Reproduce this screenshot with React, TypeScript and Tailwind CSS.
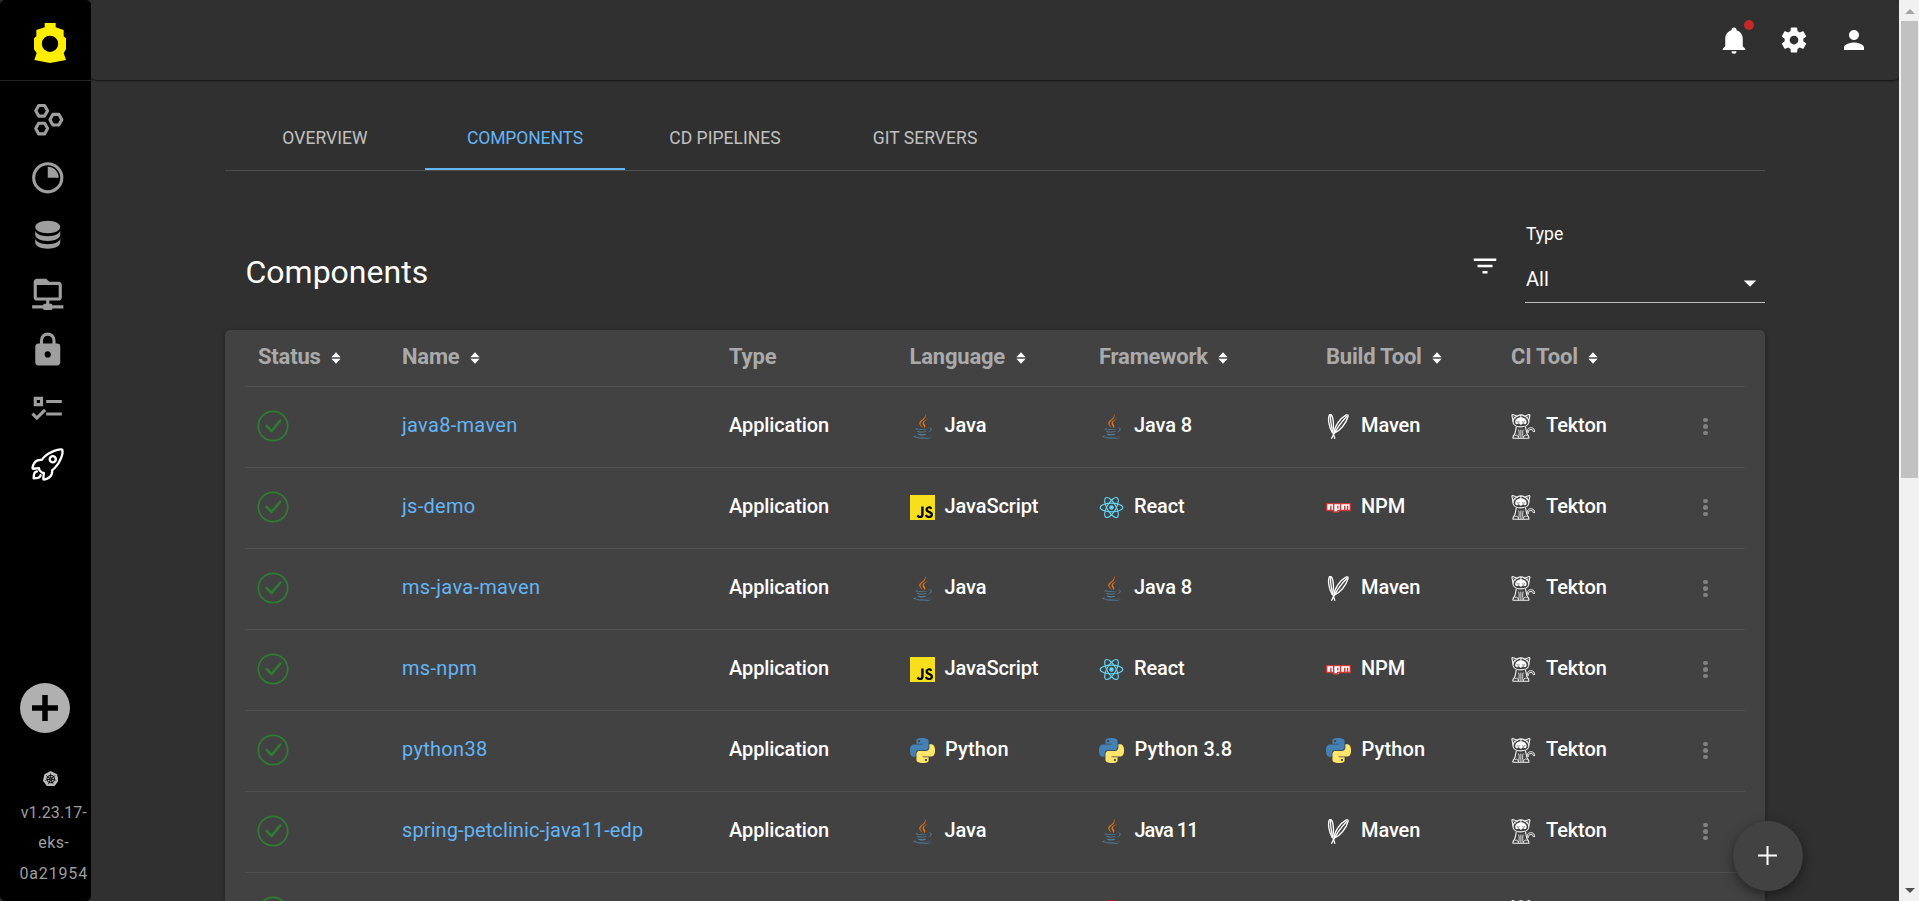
import type { ReactNode } from "react";
import { FaNpm } from "react-icons/fa";
import { IoRocketOutline } from "react-icons/io5";
import { MdPerson } from "react-icons/md";
import { SiJavascript, SiKubernetes } from "react-icons/si";

function Glyph({ d, size }: { d: string; size: string }) {
  return (
    <svg viewBox="0 0 24 24" fill="currentColor" className={size}>
      <path d={d} />
    </svg>
  );
}

const PIE =
  "M12,2A10,10 0 0,1 22,12A10,10 0 0,1 12,22A10,10 0 0,1 2,12A10,10 0 0,1 12,2M12,4A8,8 0 0,0 4,12A8,8 0 0,0 12,20A8,8 0 0,0 20,12A8,8 0 0,0 12,4M12,5A7,7 0 0,1 19,12H12V5Z";
const DATABASE =
  "M12,3C7.58,3 4,4.79 4,7C4,9.21 7.58,11 12,11C16.42,11 20,9.21 20,7C20,4.79 16.42,3 12,3M4,9V12C4,14.21 7.58,16 12,16C16.42,16 20,14.21 20,12V9C20,11.21 16.42,13 12,13C7.58,13 4,11.21 4,9M4,14V17C4,19.21 7.58,21 12,21C16.42,21 20,19.21 20,17V14C20,16.21 16.42,18 12,18C7.58,18 4,16.21 4,14Z";
const FOLDER_NETWORK =
  "M15 20C15 19.45 14.55 19 14 19H13V17H19C20.11 17 21 16.11 21 15V7C21 5.9 20.11 5 19 5H13L11 3H5C3.9 3 3 3.9 3 5V15C3 16.11 3.9 17 5 17H11V19H10C9.45 19 9 19.45 9 20H2V22H9C9 22.55 9.45 23 10 23H14C14.55 23 15 22.55 15 22H22V20H15M5 15V7H19V15H5Z";
const LOCK =
  "M12,17A2,2 0 0,0 14,15C14,13.89 13.1,13 12,13A2,2 0 0,0 10,15A2,2 0 0,0 12,17M18,8A2,2 0 0,1 20,10V20A2,2 0 0,1 18,22H6A2,2 0 0,1 4,20V10C4,8.89 4.9,8 6,8H7V6A5,5 0 0,1 12,1A5,5 0 0,1 17,6V8H18M12,3A3,3 0 0,0 9,6V8H15V6A3,3 0 0,0 12,3Z";
const CHECKS =
  "M3,5H9V11H3V5M5,7V9H7V7H5M11,7H21V9H11V7M11,15H21V17H11V15M5,20L1.5,16.5L2.91,15.09L5,17.17L9.59,12.59L11,14L5,20Z";
const BELL =
  "M21,19V20H3V19L5,17V11C5,7.9 7.03,5.17 10,4.29C10,4.19 10,4.1 10,4A2,2 0 0,1 12,2A2,2 0 0,1 14,4C14,4.1 14,4.19 14,4.29C16.97,5.17 19,7.9 19,11V17L21,19M14,21A2,2 0 0,1 12,23A2,2 0 0,1 10,21";
const COG =
  "M12,15.5A3.5,3.5 0 0,1 8.5,12A3.5,3.5 0 0,1 12,8.5A3.5,3.5 0 0,1 15.5,12A3.5,3.5 0 0,1 12,15.5M19.43,12.97C19.47,12.65 19.5,12.33 19.5,12C19.5,11.67 19.47,11.34 19.43,11L21.54,9.37C21.73,9.22 21.78,8.95 21.66,8.73L19.66,5.27C19.54,5.05 19.27,4.96 19.05,5.05L16.56,6.05C16.04,5.66 15.5,5.32 14.87,5.07L14.5,2.42C14.46,2.18 14.25,2 14,2H10C9.75,2 9.54,2.18 9.5,2.42L9.13,5.07C8.5,5.32 7.96,5.66 7.44,6.05L4.95,5.05C4.73,4.96 4.46,5.05 4.34,5.27L2.34,8.73C2.21,8.95 2.27,9.22 2.46,9.37L4.57,11C4.53,11.34 4.5,11.67 4.5,12C4.5,12.33 4.53,12.65 4.57,12.97L2.46,14.63C2.27,14.78 2.21,15.05 2.34,15.27L4.34,18.73C4.46,18.95 4.73,19.03 4.95,18.95L7.44,17.94C7.96,18.34 8.5,18.68 9.13,18.93L9.5,21.58C9.54,21.82 9.75,22 10,22H14C14.25,22 14.46,21.82 14.5,21.58L14.87,18.93C15.5,18.67 16.04,18.34 16.56,17.94L19.05,18.95C19.27,19.03 19.54,18.95 19.66,18.73L21.66,15.27C21.78,15.05 21.73,14.78 21.54,14.63L19.43,12.97Z";
const FILTER = "M6,13H18V11H6M3,6V8H21V6M10,18H14V16H10V18Z";

function Hexagons() {
  return (
    <svg viewBox="0 0 24 24" fill="none" stroke="currentColor" strokeWidth="2" strokeLinejoin="round" className="size-[37.5px]">
      <path d="M4.3 6.25L6.2 2.85H10L11.9 6.25L10 9.65H6.2Z" />
      <path d="M4.3 17.65L6.2 14.25H10L11.9 17.65L10 21.05H6.2Z" />
      <path d="M13.4 11.95L15.3 8.55H19.1L21 11.95L19.1 15.35H15.3Z" />
    </svg>
  );
}

function Logo() {
  return (
    <svg viewBox="0 0 96 120" className="h-10 w-8">
      <path
        fill="#ffee00"
        fillRule="evenodd"
        d="M32 0H65V13L89 21V40L96 46V79L89 90L96 111L48 120L1 111L8 90L0 79V46L7 40V21L32 13ZM48 38A24.5 24.5 0 1 0 48 87A24.5 24.5 0 1 0 48 38Z"
      />
    </svg>
  );
}

function Java() {
  return (
    <svg viewBox="0 0 384 512" className="h-[25px] w-[19px]">
      <path
        fill="#ea7414"
        d="M192.34 280.8c-19-42.7-83.1-80.2 0-145.8C296 53.2 242.84 0 242.84 0c21.5 84.5-75.6 110.1-110.7 162.6-23.9 35.9 11.7 74.4 60.2 118.2zM306.94 104.6c.1 0-175.2 43.8-91.5 140.2 24.7 28.4-6.5 54-6.5 54s62.7-32.4 33.9-72.9c-26.9-37.8-47.5-56.6 64.1-121.3z"
      />
      <path
        fill="#5382a1"
        d="M277.74 312.9c9.8-6.7 23.4-12.5 23.4-12.5s-38.7 7-77.2 10.2c-47.1 3.9-97.7 4.7-123.1 1.3-60.1-8 33-30.1 33-30.1s-36.1-2.4-80.6 19c-52.5 25.4 130 37 224.5 12.1zM300.84 375.1a12.19 12.19 0 0 1-2 2.6c128.3-33.7 81.1-118.9 19.8-97.3a17.33 17.33 0 0 0-8.2 6.3 70.45 70.45 0 0 1 11-3c31-6.5 75.5 41.5-20.6 91.4zM348 437.4s14.5 11.9-15.9 21.2c-57.9 17.5-240.8 22.8-291.6.7-18.3-7.9 16-19 26.8-21.3 11.2-2.4 17.7-2 17.7-2-20.3-14.3-131.3 28.1-56.4 40.2C232.84 509.4 401 461.3 348 437.4zM124.44 396c-78.7 22 47.9 67.4 148.1 24.5a185.89 185.89 0 0 1-28.2-13.8c-44.7 8.5-65.4 9.1-106 4.5-33.5-3.8-13.9-15.2-13.9-15.2zM304.24 493.2c-78.7 14.8-175.8 13.1-233.3 3.6 0-.1 11.8 9.7 72.4 13.6 92.2 5.9 233.8-3.3 237.1-46.9 0 0-6.4 16.5-76.2 29.7zM260.64 353c-59.2 11.4-93.5 11.1-136.8 6.6-33.5-3.5-11.6-19.7-11.6-19.7-86.8 28.8 48.2 61.4 169.5 25.9a60.37 60.37 0 0 1-21.1-12.8z"
      />
    </svg>
  );
}

function Python() {
  return (
    <svg viewBox="0 0 24 24" className="size-[25px]">
      <path
        fill="#4481b4"
        d="M14.25.18l.9.2.73.26.59.3.45.32.34.34.25.34.16.33.1.3.04.26.02.2-.01.13V8.5l-.05.63-.13.55-.21.46-.26.38-.3.31-.33.25-.35.19-.35.14-.33.1-.3.07-.26.04-.21.02H8.77l-.69.05-.59.14-.5.22-.41.27-.33.32-.27.35-.2.36-.15.37-.1.35-.07.32-.04.27-.02.21v3.06H3.17l-.21-.03-.28-.07-.32-.12-.35-.18-.36-.26-.36-.36-.35-.46-.32-.59-.28-.73-.21-.88-.14-1.05-.05-1.23.06-1.22.16-1.04.24-.87.32-.71.36-.57.4-.44.42-.33.42-.24.4-.16.36-.1.32-.05.24-.01h.16l.06.01h8.16v-.83H6.18l-.01-2.75-.02-.37.05-.34.11-.31.17-.28.25-.26.31-.23.38-.2.44-.18.51-.15.58-.12.64-.1.71-.06.77-.04.84-.02 1.27.05zm-6.3 1.98l-.23.33-.08.41.08.41.23.34.33.22.41.09.41-.09.33-.22.23-.34.08-.41-.08-.41-.23-.33-.33-.22-.41-.09-.41.09z"
      />
      <path
        fill="#ffe56c"
        d="M21.04 6.11l.28.06.32.12.35.18.36.27.36.35.35.47.32.59.28.73.21.88.14 1.04.05 1.23-.06 1.23-.16 1.04-.24.86-.32.71-.36.57-.4.45-.42.33-.42.24-.4.16-.36.09-.32.05-.24.02-.16-.01h-8.22v.82h5.84l.01 2.76.02.36-.05.34-.11.31-.17.29-.25.25-.31.24-.38.2-.44.17-.51.15-.58.13-.64.09-.71.07-.77.04-.84.01-1.27-.04-1.07-.14-.9-.2-.73-.25-.59-.3-.45-.33-.34-.34-.25-.34-.16-.33-.1-.3-.04-.25-.02-.2.01-.13v-5.34l.05-.64.13-.54.21-.46.26-.38.3-.32.33-.24.35-.2.35-.14.33-.1.3-.06.26-.04.21-.02.13-.01h5.84l.69-.05.59-.14.5-.21.41-.28.33-.32.27-.35.2-.36.15-.36.1-.35.07-.32.04-.28.02-.21V6.07h2.09l.14.01zM14.57 20.36l-.23.33-.08.41.08.41.23.33.33.23.41.08.41-.08.33-.23.23-.33.08-.41-.08-.41-.23-.33-.33-.23-.41-.08-.41.08z"
      />
    </svg>
  );
}

function ReactLogo() {
  return (
    <svg viewBox="-12.5 -12.5 25 25" className="size-[25px]" fill="none" stroke="#61dafb" strokeWidth="1.1">
      <circle r="2.2" fill="#61dafb" stroke="none" />
      <ellipse rx="11.3" ry="4.4" />
      <ellipse rx="11.3" ry="4.4" transform="rotate(60)" />
      <ellipse rx="11.3" ry="4.4" transform="rotate(120)" />
    </svg>
  );
}

function Npm() {
  return (
    <span className="relative flex h-[25px] w-[25px] items-center justify-center text-[#cb3837]">
      <span className="absolute left-px top-[9px] h-[7px] w-[23px] bg-white" />
      <span className="absolute left-[8px] top-[9px] h-[8px] w-[5px] bg-white" />
      <FaNpm className="relative h-[22.2px] w-[25px]" />
    </span>
  );
}

/* Two crossing feathers. */
function Maven() {
  return (
    <svg viewBox="0 0 25 25" className="size-[25px]" fill="none" stroke="#fff" strokeWidth="1.3" strokeLinecap="round" strokeLinejoin="round">
      <path d="M3.4 .8C1.8 4.2 2.5 12.5 6.3 18.6C8.3 13 7.5 3.4 5.2 .8C4.7 .3 3.8 .3 3.4 .8Z" />
      <path d="M4.3 1.5C4.7 9 5.5 16 8.8 24.3" />
      <path d="M7.9 19.4C8.2 12.5 14 4.3 20.3 .9C21.5 .5 22.4 1.3 22 2.5C20.3 9.3 14.2 16.8 7.9 19.4Z" />
      <path d="M20.8 2.2C15 8.5 10 14.5 5.7 24.3" />
    </svg>
  );
}

/* Sitting robot cat with a curled tail. */
function Tekton() {
  return (
    <svg viewBox="0 0 25 25" className="size-[25px]" fill="none" stroke="#f2f2f2" strokeWidth="1.1" strokeLinecap="round" strokeLinejoin="round">
      <path d="M2 7.2L.9 1.2Q.9 .5 1.7 .6L6.5 2.3M17.8 7.2L18.9 1.2Q18.9 .5 18.1 .6L13.3 2.3" />
      <path d="M2.8 2.8L4.6 4.1M17 2.8L15.2 4.1" strokeWidth=".8" />
      <path d="M6.3 2C8.5 .6 11.4 .6 13.6 2C16.5 3.3 18 6 17.8 8.5C17.2 11.3 13.5 12.9 9.9 12.9S2.6 11.3 2 8.5C1.8 6 3.3 3.3 6.3 2ZM9.9 1V3.5" />
      <path fill="#fff" stroke="none" d="M4.3 7C5.2 4.4 7.5 3.2 9.9 3.2S14.6 4.4 15.5 7C15.9 8.7 15.2 9.8 14 10.3L12 9.3L9.9 11L7.8 9.3L5.8 10.3C4.6 9.8 3.9 8.7 4.3 7Z" />
      <path stroke="#424242" strokeWidth=".7" d="M6 7.8Q7.2 8.6 8.3 8M13.8 7.8Q12.6 8.6 11.5 8" />
      <path d="M5.3 13C4.7 15.5 4.5 18.5 3.5 20.5C2.5 21.5 1.7 22.7 1.9 24.3H17.9C18.1 22.7 17.3 21.5 16.3 20.5C15.5 18.5 15.1 15.5 14.5 13" />
      <path strokeWidth=".9" d="M7.7 16C8.5 18 8.3 21 7.5 24M12.1 16C11.3 18 11.5 21 12.3 24M9.9 16V23.5M4.5 21.3C5.8 20.5 7 21.5 7.2 23M15.3 21.3C14 20.5 12.8 21.5 12.6 23" />
      <path strokeWidth="1" d="M16.5 18.2C15.6 15.2 17.8 13.5 20.2 13.7C22.6 13.9 24 15.7 23.6 17.5M17.4 18.3C16.9 16.4 18.3 15.4 20 15.5C21.7 15.7 22.2 16.6 22.2 17.6L23.5 17.5" />
    </svg>
  );
}

function Lang({ kind }: { kind: string }) {
  if (kind === "java") return <Java />;
  if (kind === "js") return <SiJavascript className="size-[25px] bg-black text-[#f7df1e]" />;
  if (kind === "react") return <ReactLogo />;
  if (kind === "npm") return <Npm />;
  if (kind === "maven") return <Maven />;
  if (kind === "python") return <Python />;
  if (kind === "tekton") return <Tekton />;
  if (kind === "red") return <span className="size-[25px] rounded-full bg-[#cc1018]" />;
  return null;
}

function Tool({ kind, label }: { kind: string; label: string }) {
  return (
    <div className="flex items-center pl-[13px]">
      <span className="mb-[2px] flex w-[25px] justify-center">
        <Lang kind={kind} />
      </span>
      <span
        className={
          label === "Java 11"
            ? "pb-[4px] pl-[10.5px] tracking-[-1px]"
            : label.startsWith("Python")
              ? "pb-[4px] pl-[10.5px] tracking-[0.15px]"
              : "pb-[4px] pl-[10px]"
        }
      >
        {label}
      </span>
    </div>
  );
}

function Status() {
  return (
    <svg viewBox="-16 -16 32 32" className="size-8" fill="none" stroke="#2e7d32">
      <circle r="14.7" strokeWidth="1.7" />
      <path d="M-6.5 -.2L-1.4 5L7.3 -5.5" strokeWidth="2.5" strokeLinecap="round" strokeLinejoin="round" />
    </svg>
  );
}

const GRID = "grid grid-cols-[144px_327px_180.5px_189.5px_227px_185px_1fr_79px]";

function Head({ label, sort = true }: { label: string; sort?: boolean }) {
  return (
    <div className={sort ? "flex items-center pl-[13px] pt-px" : "flex items-center pl-[13px]"}>
      <span className="pb-[4px]">{label}</span>
      {sort && (
        <svg viewBox="0 0 10 12" className="mb-[2px] ml-[10.5px] h-3 w-[10px]" fill="#fff">
          <path d="M5 .2L9.6 5.2H.4ZM5 11.8L.4 6.8H9.6Z" />
        </svg>
      )}
    </div>
  );
}

type Row = { name: string; lang: [string, string]; fw: [string, string]; build: [string, string]; app?: string; ci?: string };
const JAVA: [string, string] = ["java", "Java"];
const JS: [string, string] = ["js", "JavaScript"];
const REACT: [string, string] = ["react", "React"];
const MAVEN: [string, string] = ["maven", "Maven"];
const NPM: [string, string] = ["npm", "NPM"];
const PY: [string, string] = ["python", "Python"];
const ROWS: Row[] = [
  { name: "java8-maven", lang: JAVA, fw: ["java", "Java 8"], build: MAVEN },
  { name: "js-demo", lang: JS, fw: REACT, build: NPM },
  { name: "ms-java-maven", lang: JAVA, fw: ["java", "Java 8"], build: MAVEN },
  { name: "ms-npm", lang: JS, fw: REACT, build: NPM },
  { name: "python38", lang: PY, fw: ["python", "Python 3.8"], build: PY },
  { name: "spring-petclinic-java11-edp", lang: JAVA, fw: ["java", "Java 11"], build: MAVEN },
  { name: "", lang: ["", ""], fw: ["red", ""], build: ["", ""], app: "", ci: "" },
];

function TableRow({ row }: { row: Row }) {
  return (
    <div className={`${GRID} h-[81px] border-b border-[#515151] text-[20px] font-medium tracking-[-0.1px] text-white`}>
      <div className="flex items-center pb-[2px] pl-[12px]">
        <Status />
      </div>
      <div
        className={
          row.name.length > 20
            ? "flex items-center pb-[4px] pl-[13px] font-normal tracking-[0.1px] text-[#64b5f6]"
            : "flex items-center pb-[4px] pl-[13px] font-normal tracking-[0.3px] text-[#64b5f6]"
        }
      >
        {row.name}
      </div>
      <div className="flex items-center pb-[4px] pl-[13px]">{row.app ?? "Application"}</div>
      <Tool kind={row.lang[0]} label={row.lang[1]} />
      <Tool kind={row.fw[0]} label={row.fw[1]} />
      <Tool kind={row.build[0]} label={row.build[1]} />
      <Tool kind="tekton" label={row.ci ?? "Tekton"} />
      <div className="flex flex-col items-center justify-center gap-[2px] pb-px">
        <span className="size-[4.2px] rounded-full bg-[#828282]" />
        <span className="size-[4.2px] rounded-full bg-[#828282]" />
        <span className="size-[4.2px] rounded-full bg-[#828282]" />
      </div>
    </div>
  );
}

function NavItem({ children }: { children: ReactNode }) {
  return <div className="flex h-[57.5px] items-center justify-center">{children}</div>;
}

function Sidebar() {
  return (
    <aside className="flex w-[90.5px] shrink-0 flex-col rounded-[5px] bg-black text-[#9e9e9e]">
      <div className="flex h-[81px] justify-center border-b border-[#242424] pl-[9.5px] pt-[23px]">
        <Logo />
      </div>
      <nav className="pl-[4px] pt-[10px]">
        <NavItem><Hexagons /></NavItem>
        <NavItem><Glyph d={PIE} size="size-[37.5px]" /></NavItem>
        <NavItem><Glyph d={DATABASE} size="size-[37.5px]" /></NavItem>
        <NavItem><Glyph d={FOLDER_NETWORK} size="size-[37.5px]" /></NavItem>
        <NavItem><Glyph d={LOCK} size="size-[37.5px]" /></NavItem>
        <NavItem><Glyph d={CHECKS} size="size-[37.5px]" /></NavItem>
        <NavItem><IoRocketOutline className="size-[37px] text-white" /></NavItem>
      </nav>
      <div className="mt-auto flex flex-col items-center pb-[12px]">
        <div className="flex size-[50px] items-center justify-center rounded-full bg-[#b0b0b0]">
          <svg viewBox="0 0 26 26" className="size-[26px]" stroke="#000" strokeWidth="5.5">
            <path d="M13 0V26M0 13H26" />
          </svg>
        </div>
        <SiKubernetes className="ml-[10px] mt-[38px] size-[15.5px] text-[#bdbdbd]" />
        <div className="ml-[17px] mt-[11.5px] flex flex-col items-center text-[16px] leading-[30.4px]">
          <span className="tracking-[0.05px]">v1.23.17-</span>
          <span className="tracking-[0.4px]">eks-</span>
          <span className="tracking-[0.85px]">0a21954</span>
        </div>
      </div>
    </aside>
  );
}

const TABS = ["OVERVIEW", "COMPONENTS", "CD PIPELINES", "GIT SERVERS"];

export default function App() {
  return (
    <div className="relative flex h-[901px] w-full overflow-hidden bg-[#303030] font-['Roboto',sans-serif]">
      <Sidebar />
      <div className="flex min-w-0 flex-1 flex-col">
        <header className="flex h-20 shrink-0 items-center justify-end gap-[30px] rounded-[5px] pr-[30px] text-white shadow-[0_1px_2px_rgba(0,0,0,0.6)]">
          <span className="relative">
            <Glyph d={BELL} size="size-[30px]" />
            <span className="absolute -top-[5px] left-[25px] size-[10px] rounded-full bg-[#c62828]" />
          </span>
          <Glyph d={COG} size="size-[30px]" />
          <MdPerson className="size-[30px]" />
        </header>
        <main className="ml-[134.5px] w-[1540px]">
          <div className="mt-[10px] flex h-[81px] border-b border-[#4d4d4d]">
            {TABS.map((t, i) => (
              <div
                key={t}
                className={
                  i === 1
                    ? "flex w-[200px] items-center justify-center border-b-2 border-[#64b5f6] pt-[19px] text-[17.5px] tracking-[-0.1px] text-[#64b5f6]"
                    : "flex w-[200px] items-center justify-center pt-[17px] text-[17.5px] tracking-[0.05px] text-[#c1c1c1]"
                }
              >
                {t}
              </div>
            ))}
          </div>
          <div className="flex h-[159px] pl-[20.5px]">
            <h1 className="pt-[82px] text-[32px] leading-[38px] text-white">Components</h1>
            <div className="ml-auto pt-[80px] text-white">
              <Glyph d={FILTER} size="size-[30px]" />
            </div>
            <div className="ml-[25px] mt-[50px] flex h-[82px] w-[240px] flex-col border-b border-[#c0c0c0] text-white">
              <span className="pl-px pt-[2px] text-[17.5px] leading-[22px]">Type</span>
              <span className="mt-[19px] flex h-[30px] justify-between pl-px text-[20px] leading-[30px]">
                <span>All</span>
                <svg viewBox="0 0 24 24" fill="#fff" className="mt-[4px] size-[30px] shrink-0">
                  <path d="M7 10l5 5 5-5z" />
                </svg>
              </span>
            </div>
          </div>
          <section className="rounded-[5px] bg-[#424242] px-5 shadow-[0_1px_4px_rgba(0,0,0,0.35)]">
            <div className={`${GRID} h-[57px] border-b border-[#515151] text-[22px] font-bold tracking-[-0.2px] text-[#aaaaaa]`}>
              <Head label="Status" />
              <Head label="Name" />
              <Head label="Type" sort={false} />
              <Head label="Language" />
              <Head label="Framework" />
              <Head label="Build Tool" />
              <Head label="CI Tool" />
            </div>
            {ROWS.map((r) => (
              <TableRow key={r.name} row={r} />
            ))}
          </section>
        </main>
      </div>
      <div className="flex w-5 shrink-0 flex-col items-center bg-[#f1f1f1] pl-px">
        <svg viewBox="0 0 10 5" className="mt-[9px] h-[5px] w-[10px]" fill="#a3a3a3"><path d="M0 5L5 0L10 5Z" /></svg>
        <div className="mt-[7px] h-[457px] w-[17px] bg-[#c1c1c1]" />
        <svg viewBox="0 0 10 5" className="mb-[8px] mt-auto h-[5px] w-[10px]" fill="#505050"><path d="M0 0L5 5L10 0Z" /></svg>
      </div>
      <button className="absolute left-[1732.5px] top-[820.5px] flex size-[70px] items-center justify-center rounded-full bg-[#424242] shadow-[0_4px_12px_rgba(0,0,0,0.45)]">
        <svg viewBox="0 0 19 19" className="mb-px size-[19px]" stroke="#fff" strokeWidth="2"><path d="M9.5 0V19M0 9.5H19" /></svg>
      </button>
    </div>
  );
}
